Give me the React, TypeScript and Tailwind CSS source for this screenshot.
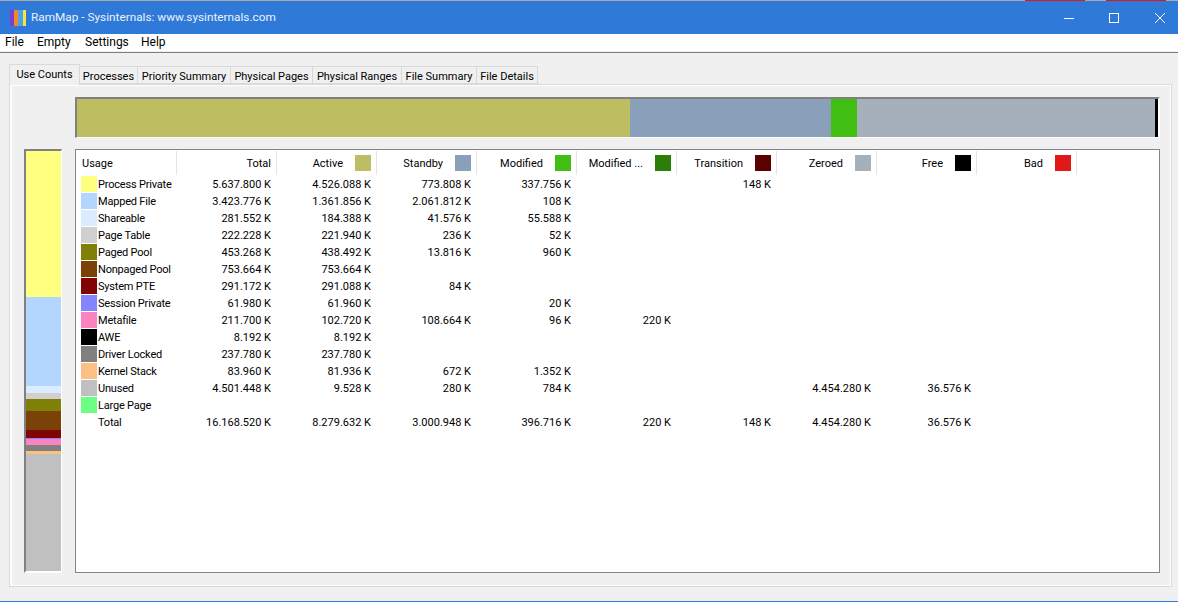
import React from "react";

const FONT = "font-['Roboto','Noto_Sans',sans-serif]";

const tabs = ["Processes", "Priority Summary", "Physical Pages", "Physical Ranges", "File Summary", "File Details"];
const tabWidths = ["w-[58px]", "w-[93px]", "w-[82px]", "w-[89px]", "w-[75px]", "w-[61px]"];

const menuItems = [
  { label: "File", cls: "w-[32px]" },
  { label: "Empty", cls: "w-[48px]" },
  { label: "Settings", cls: "w-[56px]" },
  { label: "Help", cls: "w-[40px]" },
];

const columns = [
  { label: "Total", swatch: "" },
  { label: "Active", swatch: "bg-[#bdbd62]" },
  { label: "Standby", swatch: "bg-[#8a9fba]" },
  { label: "Modified", swatch: "bg-[#40bf12]" },
  { label: "Modified ...", swatch: "bg-[#2b7f08]" },
  { label: "Transition", swatch: "bg-[#5c0000]" },
  { label: "Zeroed", swatch: "bg-[#a6b0bb]" },
  { label: "Free", swatch: "bg-[#000000]" },
  { label: "Bad", swatch: "bg-[#e21717]" },
];

const rows = [
  { name: "Process Private", color: "bg-[#ffff80]", v: ["5.637.800 K", "4.526.088 K", "773.808 K", "337.756 K", "", "148 K", "", "", ""] },
  { name: "Mapped File", color: "bg-[#b3d6ff]", v: ["3.423.776 K", "1.361.856 K", "2.061.812 K", "108 K", "", "", "", "", ""] },
  { name: "Shareable", color: "bg-[#dcebff]", v: ["281.552 K", "184.388 K", "41.576 K", "55.588 K", "", "", "", "", ""] },
  { name: "Page Table", color: "bg-[#d0d0d0]", v: ["222.228 K", "221.940 K", "236 K", "52 K", "", "", "", "", ""] },
  { name: "Paged Pool", color: "bg-[#808008]", v: ["453.268 K", "438.492 K", "13.816 K", "960 K", "", "", "", "", ""] },
  { name: "Nonpaged Pool", color: "bg-[#7b4208]", v: ["753.664 K", "753.664 K", "", "", "", "", "", "", ""] },
  { name: "System PTE", color: "bg-[#800404]", v: ["291.172 K", "291.088 K", "84 K", "", "", "", "", "", ""] },
  { name: "Session Private", color: "bg-[#8484ff]", v: ["61.980 K", "61.960 K", "", "20 K", "", "", "", "", ""] },
  { name: "Metafile", color: "bg-[#fb84c0]", v: ["211.700 K", "102.720 K", "108.664 K", "96 K", "220 K", "", "", "", ""] },
  { name: "AWE", color: "bg-[#000000]", v: ["8.192 K", "8.192 K", "", "", "", "", "", "", ""] },
  { name: "Driver Locked", color: "bg-[#808080]", v: ["237.780 K", "237.780 K", "", "", "", "", "", "", ""] },
  { name: "Kernel Stack", color: "bg-[#fbc084]", v: ["83.960 K", "81.936 K", "672 K", "1.352 K", "", "", "", "", ""] },
  { name: "Unused", color: "bg-[#c0c0c0]", v: ["4.501.448 K", "9.528 K", "280 K", "784 K", "", "", "4.454.280 K", "36.576 K", ""] },
  { name: "Large Page", color: "bg-[#6bff84]", v: ["", "", "", "", "", "", "", "", ""] },
  { name: "Total", color: "", v: ["16.168.520 K", "8.279.632 K", "3.000.948 K", "396.716 K", "220 K", "148 K", "4.454.280 K", "36.576 K", ""] },
];

const usageSegments = [
  "h-[146px] bg-[#ffff80]",
  "h-[89px] bg-[#b3d6ff]",
  "h-[7px] bg-[#dcebff]",
  "h-[6px] bg-[#d0d0d0]",
  "h-[12px] bg-[#808008]",
  "h-[19px] bg-[#7b4208]",
  "h-[8px] bg-[#800404]",
  "h-[1px] bg-[#8484ff]",
  "h-[6px] bg-[#fb84c0]",
  "h-[6px] bg-[#808080]",
  "h-[3px] bg-[#fbc084]",
  "flex-1 bg-[#c0c0c0]",
];

const AppIcon = () => (
  <svg width="16" height="16" viewBox="0 0 16 16" className="shrink-0">
    <rect x="0" y="0" width="4" height="16" fill="#7a3fd0" />
    <rect x="4" y="0" width="4" height="16" fill="#f08a24" />
    <rect x="8" y="0" width="5" height="16" fill="#4aa3f0" />
    <rect x="13" y="0" width="3" height="16" fill="#f5e63a" />
  </svg>
);

const WindowControls = () => (
  <div className="mr-[13px] flex items-center">
    <svg width="10" height="10" viewBox="0 0 10 10" className="mr-[35px]">
      <path d="M0 5.5H10" stroke="white" strokeWidth="1" />
    </svg>
    <svg width="10" height="10" viewBox="0 0 10 10" className="mr-[36px]">
      <rect x="0.5" y="0.5" width="9" height="9" fill="none" stroke="white" strokeWidth="1" />
    </svg>
    <svg width="10" height="10" viewBox="0 0 10 10">
      <path d="M0 0L10 10M10 0L0 10" stroke="white" strokeWidth="1" />
    </svg>
  </div>
);

export default function App() {
  return (
    <div className={`flex h-[602px] w-[1178px] flex-col overflow-hidden bg-[#f0f0f0] text-[11px] text-black ${FONT}`}>
      <div className="flex h-[1px] shrink-0 bg-[#a8a8a8] pl-[1025px]">
        <div className="w-[60px] bg-[#e21717]" />
        <div className="ml-[21px] w-[60px] bg-[#e21717]" />
      </div>
      <div className="flex h-[33px] shrink-0 items-center justify-between bg-[#2f7ad9] pl-[10px]">
        <div className="flex items-center gap-[5px]">
          <AppIcon />
          <span className="text-[11.8px] text-[#eaf2fc]">RamMap - Sysinternals: www.sysinternals.com</span>
        </div>
        <WindowControls />
      </div>

      <div className="flex h-[17px] shrink-0 items-center bg-white pb-[1px] pl-[5px] text-[12px]">
        {menuItems.map((m) => (
          <span key={m.label} className={m.cls}>{m.label}</span>
        ))}
      </div>
      <div className="h-[1px] shrink-0 bg-[#f0f0f0]" />
      <div className="h-[1px] shrink-0 bg-[#7d7d7d]" />

      <div className="flex min-h-0 flex-1 flex-col pl-[9px] pr-[6px] pt-[10px]">
        <div className="z-10 flex h-[21px] shrink-0 items-end whitespace-nowrap">
          <div className="mb-[-1px] flex h-[21px] w-[71px] items-center justify-center border border-b-0 border-[#d9d9d9] bg-[#f0f0f0]">
            Use Counts
          </div>
          {tabs.map((t, i) => (
            <div key={t} className={`flex h-[18px] items-center justify-center border border-l-0 border-[#d9d9d9] bg-[#f0f0f0] pt-[5px] ${tabWidths[i]}`}>
              {t}
            </div>
          ))}
        </div>

        <div className="flex h-[503px] shrink-0 border border-[#d9d9d9]">
          <div className="flex w-full gap-[13px] border-[1px] border-l-2 border-white pl-[12px] pt-[11px]">
            <div className="flex w-[38px] shrink-0 flex-col pt-[52px]">
              <div className="flex h-[424px] flex-col border-b-2 border-l-2 border-r border-t-2 border-b-white border-l-[#808080] border-r-white border-t-[#808080]">
                {usageSegments.map((s) => (
                  <div key={s} className={`w-full ${s}`} />
                ))}
              </div>
            </div>

            <div className="flex w-[1085px] shrink-0 flex-col">
              <div className="flex h-[41px] border-b border-l-2 border-r-2 border-t-2 border-b-white border-l-[#808080] border-r-white border-t-[#808080]">
                <div className="w-[553px] bg-[#bdbd62]" />
                <div className="w-[201px] bg-[#8a9fba]" />
                <div className="w-[26px] bg-[#40bf12]" />
                <div className="w-[298px] bg-[#a6b0bb]" />
                <div className="flex-1 bg-black" />
              </div>

              <div className="mt-[11px] h-[424px] border border-[#82878f] bg-white pl-[1px] pt-[1px]">
                <div className="flex h-[24px]">
                  <div className="flex w-[100px] items-center border-r border-[#e5e5e5] pl-[5px]">
                    <span className="pt-[3px]">Usage</span>
                  </div>
                  {columns.map((c) => (
                    <div key={c.label} className="flex w-[100px] items-center justify-end border-r border-[#e5e5e5] pr-[5px]">
                      <span className="pt-[3px]">{c.label}</span>
                      {c.swatch && <span className={`ml-[12px] h-[16px] w-[16px] ${c.swatch}`} />}
                    </div>
                  ))}
                </div>

                {rows.map((r) => (
                  <div key={r.name} className="flex h-[17px] items-center">
                    <div className="flex w-[100px] items-center pl-[4px]">
                      <span className={`mr-[1px] h-[16px] w-[16px] shrink-0 ${r.color}`} />
                      <span className="whitespace-nowrap pt-[4px] tracking-[-0.2px]">{r.name}</span>
                    </div>
                    {r.v.map((val, i) => (
                      <div key={i} className="w-[100px] whitespace-nowrap pr-[6px] pt-[4px] text-right">{val}</div>
                    ))}
                  </div>
                ))}
              </div>
            </div>
          </div>
        </div>
      </div>
      <div className="h-[1px] shrink-0 bg-[#2f7ad9]" />
    </div>
  );
}
